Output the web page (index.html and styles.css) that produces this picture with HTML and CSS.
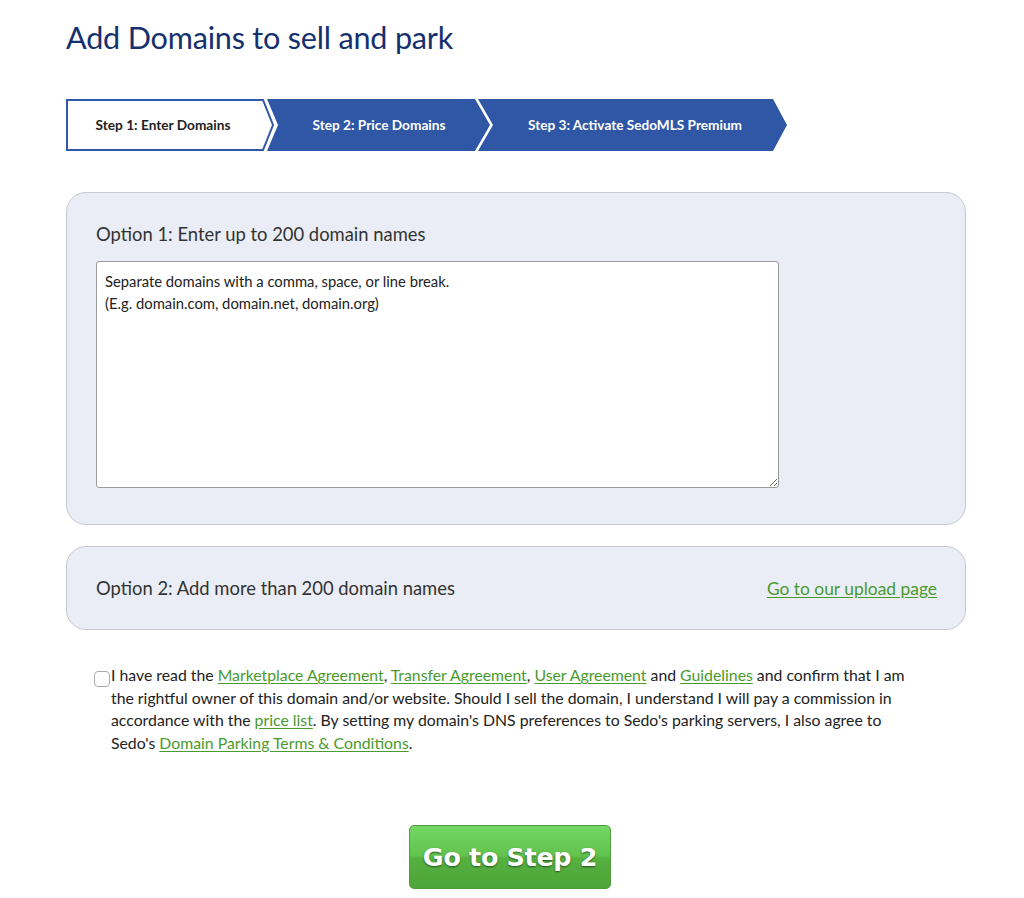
FILE: index.html
```html
<!DOCTYPE html>
<html>
<head>
<meta charset="utf-8">
<link rel="stylesheet" href="styles.css">
</head>
<body>
<div class="page">
  <h1 class="title">Add Domains to sell and park</h1>

  <div class="steps">
    <svg class="steps-svg" width="722" height="52" viewBox="0 0 722 52">
      <polygon points="1,1 197,1 207,26 197,51 1,51" fill="#fff" stroke="#3158a6" stroke-width="2"/>
      <polygon points="201,0 409,0 424,26 409,52 201,52 212,26" fill="#2f57a6"/>
      <polygon points="412,0 707,0 721,26 707,52 412,52 427,26" fill="#2f57a6"/>
      <text class="step-text dark" x="97" y="31" text-anchor="middle" textLength="135" lengthAdjust="spacingAndGlyphs">Step 1: Enter Domains</text>
      <text class="step-text" x="313" y="31" text-anchor="middle" textLength="133" lengthAdjust="spacingAndGlyphs">Step 2: Price Domains</text>
      <text class="step-text" x="569" y="31" text-anchor="middle" textLength="214" lengthAdjust="spacingAndGlyphs">Step 3: Activate SedoMLS Premium</text>
    </svg>
  </div>

  <section class="panel panel-one">
    <h2 class="panel-label">Option 1: Enter up to 200 domain names</h2>
    <textarea class="domains" placeholder="Separate domains with a comma, space, or line break.&#10;(E.g. domain.com, domain.net, domain.org)"></textarea>
  </section>

  <section class="panel panel-two">
    <h2 class="panel-label">Option 2: Add more than 200 domain names</h2>
    <a class="link upload" href="#">Go to our upload page</a>
  </section>

  <div class="terms">
    <span class="checkbox"></span>
    <p class="terms-text">I have read the <a class="link" href="#">Marketplace Agreement</a>, <a class="link" href="#">Transfer Agreement</a>, <a class="link" href="#">User Agreement</a> and <a class="link" href="#">Guidelines</a> and confirm that I am the rightful owner of this domain and/or website. Should I sell the domain, I understand I will pay a commission in accordance with the <a class="link" href="#">price list</a>. By setting my domain's DNS preferences to Sedo's parking servers, I also agree to Sedo's <a class="link" href="#">Domain Parking Terms &amp; Conditions</a>.</p>
  </div>

  <div class="actions">
    <button class="go-btn">Go to Step 2</button>
  </div>
</div>
</body>
</html>
```

FILE: styles.css
```css
html, body {
  margin: 0;
  padding: 0;
  background: #fff;
}

body {
  font-family: Lato, "Liberation Sans", sans-serif;
  color: #222;
}

.page {
  width: 900px;
  padding: 0 0 0 66px;
}

.title {
  margin: 0;
  padding-top: 19px;
  height: 38px;
  font-size: 30.6px;
  font-weight: 400;
  color: #15306e;
  line-height: 38px;
  letter-spacing: -0.2px;
}

.steps {
  margin-top: 42px;
  height: 52px;
}

.steps-svg {
  display: block;
}

.step-text {
  font-family: Lato, "Liberation Sans", sans-serif;
  font-size: 14px;
  font-weight: 700;
  fill: #fff;
}

.step-text.dark {
  fill: #222;
}

.panel {
  box-sizing: border-box;
  width: 900px;
  background: #eaedf5;
  border: 1px solid #c6c9cf;
  border-radius: 20px;
}

.panel-one {
  margin-top: 41px;
  height: 333px;
  padding: 29px 29px 0;
}

.panel-label {
  margin: 0;
  font-size: 18.4px;
  font-weight: 400;
  color: #333;
  line-height: 24px;
}

.domains {
  display: block;
  box-sizing: border-box;
  margin-top: 15px;
  width: 683px;
  height: 227px;
  padding: 8px 8px;
  border: 1px solid #9a9a9a;
  border-radius: 3px;
  background: #fff;
  font-family: Lato, "Liberation Sans", sans-serif;
  font-size: 14.8px;
  line-height: 22px;
  color: #222;
  resize: both;
}

.domains::placeholder {
  color: #222;
  opacity: 1;
}

.panel-two {
  margin-top: 21px;
  height: 84px;
  padding: 0 28px 0 29px;
  display: flex;
  align-items: center;
  justify-content: space-between;
}

.link {
  color: #4b9a2d;
  text-decoration: underline;
  text-underline-offset: 2px;
}

.upload {
  font-size: 17.4px;
}

.terms {
  display: flex;
  align-items: flex-start;
  margin-top: 34px;
  padding-left: 28px;
}

.checkbox {
  flex: none;
  box-sizing: border-box;
  width: 16px;
  height: 16px;
  margin-top: 7px;
  border: 1px solid #aaa;
  border-radius: 4px;
  background: #fff;
}

.terms-text {
  margin: 0 0 0 1px;
  width: 800px;
  font-size: 15.8px;
  line-height: 22.5px;
  color: #222;
}

.actions {
  display: flex;
  justify-content: center;
  margin-top: 71px;
}

.go-btn {
  width: 202px;
  height: 64px;
  margin-left: -12px;
  border: 1px solid #4f9a3c;
  border-radius: 5px;
  background: linear-gradient(#75d764 0%, #62c34f 48%, #55b13f 52%, #4ea43a 100%);
  color: #fff;
  font-family: "DejaVu Sans", Verdana, sans-serif;
  font-weight: 700;
  font-size: 25.4px;
  letter-spacing: -0.3px;
  text-shadow: 0 1px 2px rgba(0, 0, 0, 0.55);
  cursor: pointer;
}
```
